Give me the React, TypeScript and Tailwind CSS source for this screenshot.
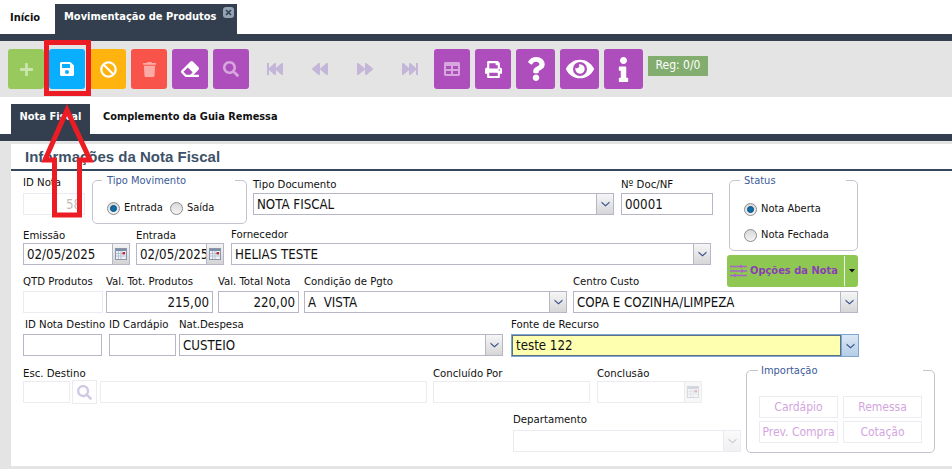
import React from "react";
import { FaPlus, FaSave, FaBan, FaTrash, FaEraser, FaSearch, FaFastBackward, FaBackward, FaForward, FaFastForward, FaTable, FaPrint, FaQuestion, FaEye, FaInfo } from "react-icons/fa";

const Chevron = ({ c = "#34508a" }: { c?: string }) => (
  <svg width="9" height="6" viewBox="0 0 9 6"><path d="M0.5 0.5 L4.5 4 L8.5 0.5 L8.5 2 L4.5 5.5 L0.5 2 Z" fill={c} /></svg>
);

const Cal = ({ off }: { off?: boolean }) => (
  <svg width="12" height="12" viewBox="0 0 12 12" className={off ? "opacity-30" : ""}>
    <rect x="0.5" y="0.5" width="11" height="11" fill="#eef2f6" stroke="#8a97ab" />
    <rect x="1" y="1" width="10" height="2" fill="#7d8fa8" />
    <path d="M1 5.5H11M1 8H11M3.5 3V11M6 3V11" stroke="#b6c2d2" strokeWidth="1" />
    <rect x="7.5" y="4" width="2.5" height="2.5" fill="#b5303a" />
  </svg>
);

function Label({ children, className = "" }: { children: React.ReactNode; className?: string }) {
  return <div className={`h-[14px] leading-[16px] text-[11.3px] text-[#111] whitespace-nowrap ${className}`}>{children}</div>;
}

function Input({ value = "", w, off, right, cal, select, focus }: { value?: string; w: string; off?: boolean; right?: boolean; cal?: boolean; select?: boolean; focus?: boolean }) {
  const border = focus ? "border-[#7ea6cf]" : off ? "border-[#ebebf1]" : "border-[#b6b6c6]";
  return (
    <div className={`${w} ${focus ? "h-[23px]" : "h-[22px]"} flex border ${border} bg-white`}>
      <div className={`flex-1 min-w-0 overflow-hidden whitespace-pre px-[3px] text-[13.2px] ${focus ? "leading-[19px]" : "leading-[21px]"} ${right ? "text-right" : ""} ${off ? "text-[#bdbdbd]" : "text-[#111]"} ${focus ? "bg-[#ffffb0] border border-[#5d7088]" : ""}`}>{value}</div>
      {cal && (
        <div className={`w-[17px] flex items-center justify-center border-l ${off ? "border-[#ebebf1] bg-[#f7f7f7]" : "border-[#b6b6c6] bg-gradient-to-b from-[#f4f4f4] to-[#d4d4d4]"}`}><Cal off={off} /></div>
      )}
      {select && (
        <div className={`w-[17px] flex items-center justify-center border-l ${focus ? "border-[#7ea6cf] bg-gradient-to-b from-[#dbe7f4] to-[#b4cde6]" : off ? "border-[#ebebf1] bg-gradient-to-b from-[#fafafa] to-[#f0f0f0]" : "border-[#b6b6c6] bg-gradient-to-b from-[#f6f6f6] to-[#d6d6d6]"}`}><Chevron c={off ? "#c8ccd4" : "#34508a"} /></div>
      )}
    </div>
  );
}

function Radio({ on }: { on?: boolean }) {
  return (
    <span className="w-[13px] h-[13px] rounded-full border border-[#8c8c8c] bg-gradient-to-b from-[#d8d8d8] to-[#f4f4f4] flex items-center justify-center shrink-0">
      {on && <span className="w-[7px] h-[7px] rounded-full bg-[#0f6ea8] border border-[#0b4f7c]" />}
    </span>
  );
}

function Group({ title, className, titleClass, children }: { title: string; className: string; titleClass: string; children: React.ReactNode }) {
  return (
    <div className={`relative border border-[#c4c4d0] rounded-[5px] ${className}`}>
      <div className={`absolute -top-[7px] bg-white text-[11px] leading-[13px] text-[#3b5a98] ${titleClass}`}>{title}</div>
      {children}
    </div>
  );
}

const Btn = ({ bg, w = "w-[36px]", children }: { bg: string; w?: string; children: React.ReactNode }) => (
  <div className={`${w} h-[40px] rounded-[3px] flex items-center justify-center text-white shrink-0 ${bg}`}>{children}</div>
);

const Nav = ({ children }: { children: React.ReactNode }) => (
  <div className="w-[45px] h-[40px] flex items-center justify-center text-[#c3b6d8]">{children}</div>
);

const Ghost = ({ children }: { children: string }) => (
  <div className="w-[79px] h-[22px] border border-[#ebebf1] text-center text-[12px] leading-[20px] text-[#d3a5de] whitespace-nowrap">{children}</div>
);

export default function App() {
  return (
    <div className="relative w-[952px] h-[469px] overflow-hidden bg-[#e4e4e4] font-['DejaVu_Sans_Condensed','Noto_Sans',sans-serif]">
      <div className="h-[34px] bg-white flex items-end pl-[10px]">
        <div className="w-[45px] h-[30px] leading-[27px] text-[11px] font-bold text-[#111]">Início</div>
        <div className="relative w-[182px] h-[30px] bg-[#333f4e] pl-[9px] leading-[26px] text-[11px] font-bold text-white whitespace-nowrap">
          Movimentação de Produtos
          <span className="absolute right-[3px] top-[3px] w-[11px] h-[11px] rounded-[3px] bg-[#93a3b3] flex items-center justify-center">
            <svg width="7" height="7" viewBox="0 0 7 7"><path d="M1 1L6 6M6 1L1 6" stroke="#333f4e" strokeWidth="1.6" /></svg>
          </span>
        </div>
      </div>
      <div className="h-[7px] bg-[#333f4e]" />

      <div className="h-[56px] pt-[8px] pl-[8px] flex items-start bg-[#e4e4e4]">
        <div className="flex gap-[5px]">
          <Btn bg="bg-[#97c95c]"><FaPlus size={15} className="opacity-50" /></Btn>
          <Btn bg="bg-[#0aaeff]"><FaSave size={16} /></Btn>
          <Btn bg="bg-[#ffb30f]"><FaBan size={17} /></Btn>
          <Btn bg="bg-[#f9544a]"><FaTrash size={15} className="opacity-50" /></Btn>
          <Btn bg="bg-[#ae4ebc]"><FaEraser size={18} /></Btn>
          <Btn bg="bg-[#ae4ebc]"><FaSearch size={16} className="opacity-50" /></Btn>
        </div>
        <div className="flex ml-[3px] mr-[2px]">
          <Nav><FaFastBackward size={16} /></Nav>
          <Nav><FaBackward size={16} /></Nav>
          <Nav><FaForward size={16} /></Nav>
          <Nav><FaFastForward size={16} /></Nav>
        </div>
        <div className="flex gap-[5px]">
          <Btn bg="bg-[#ae4ebc]"><FaTable size={16} className="opacity-50" /></Btn>
          <Btn bg="bg-[#ae4ebc]"><FaPrint size={17} /></Btn>
          <Btn bg="bg-[#ae4ebc]" w="w-[39px]"><FaQuestion size={24} /></Btn>
          <Btn bg="bg-[#ae4ebc]" w="w-[39px]"><FaEye size={28} /></Btn>
          <Btn bg="bg-[#ae4ebc]" w="w-[39px]"><FaInfo size={25} /></Btn>
        </div>
        <div className="ml-[5px] mt-[7px] w-[60px] h-[20px] bg-[#82ad6e] text-white text-[12px] leading-[18px] text-center">Reg: 0/0</div>
      </div>

      <div className="h-[37px] bg-white flex items-end pl-[11px]">
        <div className="w-[79px] h-[30px] bg-[#333f4e] text-center leading-[26px] text-[11px] font-bold text-white">Nota Fiscal</div>
        <div className="ml-[13px] h-[30px] leading-[26px] text-[10.9px] font-bold text-[#111] whitespace-nowrap">Complemento da Guia Remessa</div>
      </div>
      <div className="h-[7px] bg-[#333f4e]" />

      <div className="mt-[3px] ml-[11px] h-[322px] bg-white">
        <div className="h-[27px] border-b-2 border-[#34495e] pl-[14px] pt-[4px] text-[15px] leading-[18px] font-bold font-['Liberation_Sans',sans-serif] text-[#3d5269]">Informações da Nota Fiscal</div>

        <div className="pl-[12px]">
          <div className="flex items-start">
            <div className="w-[704px]">
              <div className="flex items-start h-[53px] pt-[6px]">
                <div className="w-[62px]">
                  <Label className="mb-[4px] -mt-[2px]">ID Nota</Label>
                  <Input w="w-[62px]" value="58" off right />
                </div>
                <Group title="Tipo Movimento" className="ml-[7px] mt-[3px] w-[155px] h-[44px] flex items-center gap-[4px] pl-[14px] pt-[12px] text-[11px] text-[#111] shrink-0" titleClass="left-[9px] right-[11px] pl-[5px]">
                  <Radio on /><span className="mr-[3px]">Entrada</span><Radio /><span>Saída</span>
                </Group>
                <div className="ml-[6px] w-[361px]">
                  <Label className="mb-[2px]">Tipo Documento</Label>
                  <Input w="w-[361px]" value="NOTA FISCAL" select />
                </div>
                <div className="ml-[7px] w-[92px]">
                  <Label className="mb-[2px]">Nº Doc/NF</Label>
                  <Input w="w-[92px]" value="00001" />
                </div>
              </div>
              <div className="flex items-start mt-[4px]">
                <div className="w-[107px]"><Label className="mb-[1px]">Emissão</Label><Input w="w-[107px]" value="02/05/2025" cal /></div>
                <div className="ml-[6px] w-[88px]"><Label className="mb-[1px]">Entrada</Label><Input w="w-[88px]" value="02/05/2025" cal /></div>
                <div className="ml-[7px] w-[480px]"><Label className="mb-[2px] -mt-[1px]">Fornecedor</Label><Input w="w-[480px]" value="HELIAS TESTE" select /></div>
              </div>
            </div>
            <div className="pt-[9px]">
              <Group title="Status" className="w-[129px] h-[71px] ml-[2px] text-[11px] text-[#111] pl-[14px] pt-[21px]" titleClass="left-[10px] right-[11px] pl-[4px]">
                <div className="flex items-center gap-[4px] h-[14px]"><Radio on /><span>Nota Aberta</span></div>
                <div className="flex items-center gap-[4px] h-[14px] mt-[12px]"><Radio /><span>Nota Fechada</span></div>
              </Group>
              <div className="mt-[4px] w-[131px] h-[32px] rounded-[3px] bg-[#8fc753] flex items-center pl-[3px]">
                <svg width="17" height="14" viewBox="0 0 17 14" className="shrink-0">
                  <path d="M0 2.5H17M0 7H17M0 11.5H17" stroke="#a566c8" strokeWidth="1.6" />
                  <rect x="10" y="1" width="2" height="3" fill="#a566c8" /><rect x="11" y="5.5" width="2" height="3" fill="#a566c8" /><rect x="4" y="10" width="2" height="3" fill="#a566c8" />
                </svg>
                <span className="ml-[3px] text-[11px] font-bold text-[#8a3fb4] whitespace-nowrap">Opções da Nota</span>
                <span className="ml-auto h-[30px] w-[1px] bg-[#eef5e4]" />
                <span className="w-[13px] flex justify-center"><svg width="6" height="4" viewBox="0 0 6 4"><path d="M0 0H6L3 3.5Z" fill="#111" /></svg></span>
              </div>
            </div>
          </div>

          <div className="flex items-start -mt-[13px]">
            <div className="w-[80px]"><Label className="mb-[3px]">QTD Produtos</Label><Input w="w-[80px]" off /></div>
            <div className="ml-[3px] w-[107px]"><Label className="mb-[3px]">Val. Tot. Produtos</Label><Input w="w-[107px]" value="215,00" right /></div>
            <div className="ml-[5px] w-[81px]"><Label className="mb-[3px]">Val. Total Nota</Label><Input w="w-[81px]" value="220,00" right /></div>
            <div className="ml-[5px] w-[263px]"><Label className="mb-[3px]">Condição de Pgto</Label><Input w="w-[263px]" value="A  VISTA" select /></div>
            <div className="ml-[6px] w-[285px]"><Label className="mb-[3px]">Centro Custo</Label><Input w="w-[285px]" value="COPA E COZINHA/LIMPEZA" select /></div>
          </div>

          <div className="flex items-start mt-[4px]">
            <div className="w-[79px]"><Label className="mb-[3px] pl-[2px]">ID Nota Destino</Label><Input w="w-[79px]" /></div>
            <div className="ml-[7px] w-[67px]"><Label className="mb-[3px]">ID Cardápio</Label><Input w="w-[67px]" /></div>
            <div className="ml-[3px] w-[324px]"><Label className="mb-[3px]">Nat.Despesa</Label><Input w="w-[324px]" value="CUSTEIO" select /></div>
            <div className="ml-[8px] w-[348px]"><Label className="mb-[3px]">Fonte de Recurso</Label><Input w="w-[348px]" value="teste 122" select focus /></div>
          </div>

          <div className="flex items-start mt-[9px]">
            <div className="w-[723px]">
              <div className="flex items-start">
                <div className="w-[47px]"><Label className="mb-[1px]">Esc. Destino</Label><Input w="w-[47px]" off /></div>
                <div className="ml-[2px] mt-[14px] w-[25px] h-[24px] border border-[#ebebf1] flex items-center justify-center text-[#d3c8e4]"><FaSearch size={15} /></div>
                <div className="ml-[3px] mt-[15px]"><Input w="w-[327px]" off /></div>
                <div className="ml-[6px] w-[157px]"><Label className="mb-[1px]">Concluído Por</Label><Input w="w-[157px]" off /></div>
                <div className="ml-[7px] w-[105px]"><Label className="mb-[1px]">Conclusão</Label><Input w="w-[105px]" off cal /></div>
              </div>
              <div className="ml-[490px] mt-[8px]">
                <Label className="mb-[4px]">Departamento</Label>
                <Input w="w-[228px]" off select />
              </div>
            </div>
            <Group title="Importação" className="mt-[4px] w-[189px] h-[83px] pt-[25px] pl-[12px]" titleClass="left-[11px] right-[11px] pl-[3px]">
              <div className="flex gap-[5px]"><Ghost>Cardápio</Ghost><Ghost>Remessa</Ghost></div>
              <div className="flex gap-[5px] mt-[3px]"><Ghost>Prev. Compra</Ghost><Ghost>Cotação</Ghost></div>
            </Group>
          </div>
        </div>
      </div>

      <div className="absolute left-[44px] top-[40px] w-[47px] h-[56px] border-[5px] border-[#ec1c24]" />
      <svg className="absolute left-0 top-0 pointer-events-none" width="120" height="225" viewBox="0 0 120 225">
        <path d="M67 110 L45 160 L54.5 160 L54.5 215 L79.5 215 L79.5 160 L90 160 Z" fill="none" stroke="#ec1c24" strokeWidth="5" />
      </svg>
    </div>
  );
}
